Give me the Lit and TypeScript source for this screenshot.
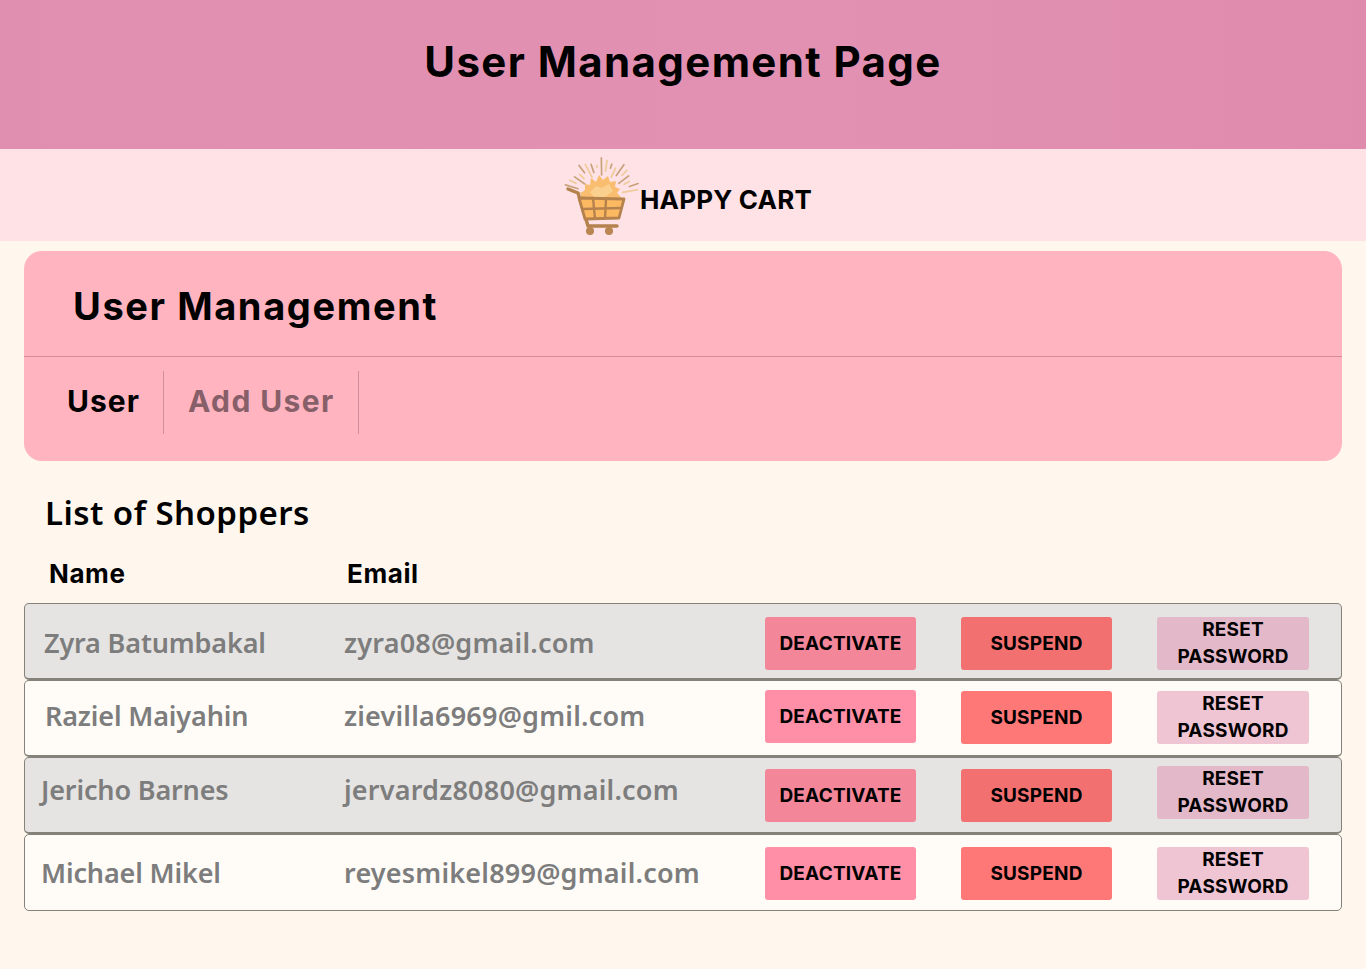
import { html, LitElement, css, svg } from 'lit';
import { customElement } from 'lit/decorators.js';
import { classMap } from 'lit/directives/class-map.js';

const shoppers = [
  { name: 'Zyra Batumbakal', email: 'zyra08@gmail.com', nameX: 19, textTop: 1, top: 13, dTop: 0, rTop: 0 },
  { name: 'Raziel Maiyahin', email: 'zievilla6969@gmil.com', nameX: 20, textTop: -3, top: 10, dTop: -1, rTop: 0 },
  { name: 'Jericho Barnes', email: 'jervardz8080@gmail.com', nameX: 16, textTop: -6, top: 11, dTop: 0, rTop: -3 },
  { name: 'Michael Mikel', email: 'reyesmikel899@gmail.com', nameX: 16, textTop: 0, top: 12, dTop: 0, rTop: 0 },
];

const rays = Array.from({ length: 19 }, (_, i) => {
  const a = ((-172 + i * 9) * Math.PI) / 180;
  const r1 = 21 + (i % 3) * 4;
  const r2 = 31 + ((i * 7) % 4) * 2.4;
  const cx = 39;
  const cy = 40;
  return svg`<line x1=${cx + r1 * Math.cos(a)} y1=${cy + r1 * Math.sin(a)} x2=${cx + r2 * Math.cos(a)} y2=${cy + r2 * Math.sin(a)} stroke=${i % 2 ? '#c9a27c' : '#eecb98'} stroke-width="1.7" stroke-linecap="round" />`;
});

@customElement('app-root')
export default class AppRoot extends LitElement {
  static styles = css`
    :host {
      display: block;
      min-height: 969px;
      background: #fff6ee;
      color: #000;
      font-family: 'Inter', 'Liberation Sans', sans-serif;
    }
    .banner {
      height: 149px;
      box-sizing: border-box;
      padding-top: 36px;
      background: linear-gradient(90deg, #e18fb1, #e291b2 60%, #df8bae);
      text-align: center;
      font-size: 42px;
      line-height: 52px;
      font-weight: 700;
      letter-spacing: 1.4px;
    }
    .brand {
      height: 92px;
      box-sizing: border-box;
      padding-left: 9px;
      background: #ffe2e6;
      display: flex;
      justify-content: center;
      align-items: center;
      font-size: 26px;
      font-weight: 700;
      letter-spacing: 0.2px;
    }
    .brand svg {
      display: block;
      width: 77px;
      height: 80px;
      margin-top: 2px;
    }
    .brand span {
      margin-top: 9px;
    }
    .panel {
      margin: 10px 24px 0;
      height: 210px;
      border-radius: 18px;
      background: #ffb4c0;
    }
    .panel h2 {
      margin: 0;
      height: 106px;
      box-sizing: border-box;
      padding: 29px 0 0 49px;
      border-bottom: 1px solid #d48c9a;
      font-size: 38px;
      line-height: 52px;
      font-weight: 700;
      letter-spacing: 1.6px;
    }
    .tabs {
      display: flex;
      padding-top: 14px;
    }
    .tab {
      height: 63px;
      line-height: 61px;
      box-sizing: border-box;
      border-right: 1px solid #cf8e9b;
      font-size: 30px;
      font-weight: 700;
      letter-spacing: 1px;
    }
    .tab.first {
      width: 140px;
      padding-left: 43px;
    }
    .tab.second {
      width: 195px;
      padding-left: 24px;
      color: #875f69;
      letter-spacing: 1.4px;
    }
    .list-title {
      margin: 31px 0 0 45px;
      font-family: 'Noto Sans', 'Open Sans', sans-serif;
      font-size: 33px;
      line-height: 42px;
      font-weight: 600;
      letter-spacing: 0.45px;
    }
    .columns {
      display: flex;
      margin: 23px 0 12px;
      font-size: 26px;
      line-height: 34px;
      font-weight: 700;
      letter-spacing: 0.6px;
    }
    .columns span:first-child {
      width: 298px;
      margin-left: 49px;
    }
    .rows {
      margin: 0 24px;
      display: flex;
      flex-direction: column;
    }
    .row {
      height: 77px;
      box-sizing: border-box;
      display: flex;
      align-items: flex-start;
      border: 1px solid #85827a;
      border-bottom-width: 2px;
      border-radius: 5px;
      background: #fffcf8;
      font-family: 'Noto Sans', 'Open Sans', sans-serif;
      font-size: 27px;
      font-weight: 600;
      color: #7d7d7d;
    }
    .row:last-child {
      border-bottom-width: 1px;
    }
    .row.grey {
      background: #e5e4e2;
    }
    .name {
      line-height: 76px;
      width: 319px;
      box-sizing: border-box;
      white-space: nowrap;
      flex: none;
      letter-spacing: -0.15px;
    }
    .email {
      line-height: 76px;
      width: 421px;
      flex: none;
      white-space: nowrap;
      letter-spacing: 0.2px;
    }
    .actions {
      display: flex;
      gap: 45px;
    }
    .btn {
      width: 151px;
      height: 53px;
      border-radius: 3px;
      display: flex;
      align-items: center;
      justify-content: center;
      text-align: center;
      color: #000;
      font-family: 'Inter', 'Liberation Sans', sans-serif;
      font-size: 19px;
      line-height: 27px;
      font-weight: 700;
      letter-spacing: 0.2px;
    }
    .deactivate { background: #ff8fa6; }
    .suspend { background: #ff7878; }
    .reset { background: #efc4d3; width: 152px; padding-bottom: 2px; box-sizing: border-box; }
    .grey .deactivate { background: #f38799; }
    .grey .suspend { background: #f37070; }
    .grey .reset { background: #e3b8c8; }
  `;

  private renderLogo() {
    return html`<svg viewBox="0 0 77 80" aria-hidden="true">
      ${rays}
      <path d="M18 37 l4 -3 l0 -6 l5 1 l1 -7 l5 4 l3 -7 l4 5 l5 -4 l2 6 l6 -1 l-1 6 l5 2 l-3 4 l4 4 l-2 3 l-20 3 l-18 -6 z" fill="#f9bd70" />
      <path d="M27 36 l6 -6 l6 2 l7 -4 l4 7 l-8 6 l-10 1 z" fill="#fbd08e" />
      <path d="M5 33 l10 4 l10 33 h29" fill="none" stroke="#b5814c" stroke-width="3.4" stroke-linecap="round" stroke-linejoin="round" />
      <path d="M16 42 l45 1 l-5 19 l-34 1 z" fill="#fcb962" stroke="#b5814c" stroke-width="2.8" stroke-linejoin="round" />
      <path d="M30 42 l2 21 M43 43 l-1 20 M19 53 l40 -1" stroke="#b5814c" stroke-width="2.4" fill="none" />
      <circle cx="27" cy="75" r="4" fill="#b98550" />
      <circle cx="46" cy="75" r="4" fill="#b98550" />
    </svg>`;
  }

  private renderRow(s: (typeof shoppers)[number], i: number) {
    return html`
      <div class=${classMap({ row: true, grey: i % 2 === 0 })}>
        <div class="name" style="padding-left:${s.nameX}px;margin-top:${s.textTop}px">${s.name}</div>
        <div class="email" style="margin-top:${s.textTop}px">${s.email}</div>
        <div class="actions" style="margin-top:${s.top}px">
          <div class="btn deactivate" style="margin-top:${s.dTop}px">DEACTIVATE</div>
          <div class="btn suspend">SUSPEND</div>
          <div class="btn reset" style="margin-top:${s.rTop}px">RESET<br />PASSWORD</div>
        </div>
      </div>
    `;
  }

  render() {
    return html`
      <div class="banner">User Management Page</div>
      <div class="brand">${this.renderLogo()}<span>HAPPY CART</span></div>
      <section class="panel">
        <h2>User Management</h2>
        <div class="tabs">
          <div class="tab first">User</div>
          <div class="tab second">Add User</div>
        </div>
      </section>
      <div class="list-title">List of Shoppers</div>
      <div class="columns"><span>Name</span><span>Email</span></div>
      <div class="rows">${shoppers.map((s, i) => this.renderRow(s, i))}</div>
    `;
  }
}
